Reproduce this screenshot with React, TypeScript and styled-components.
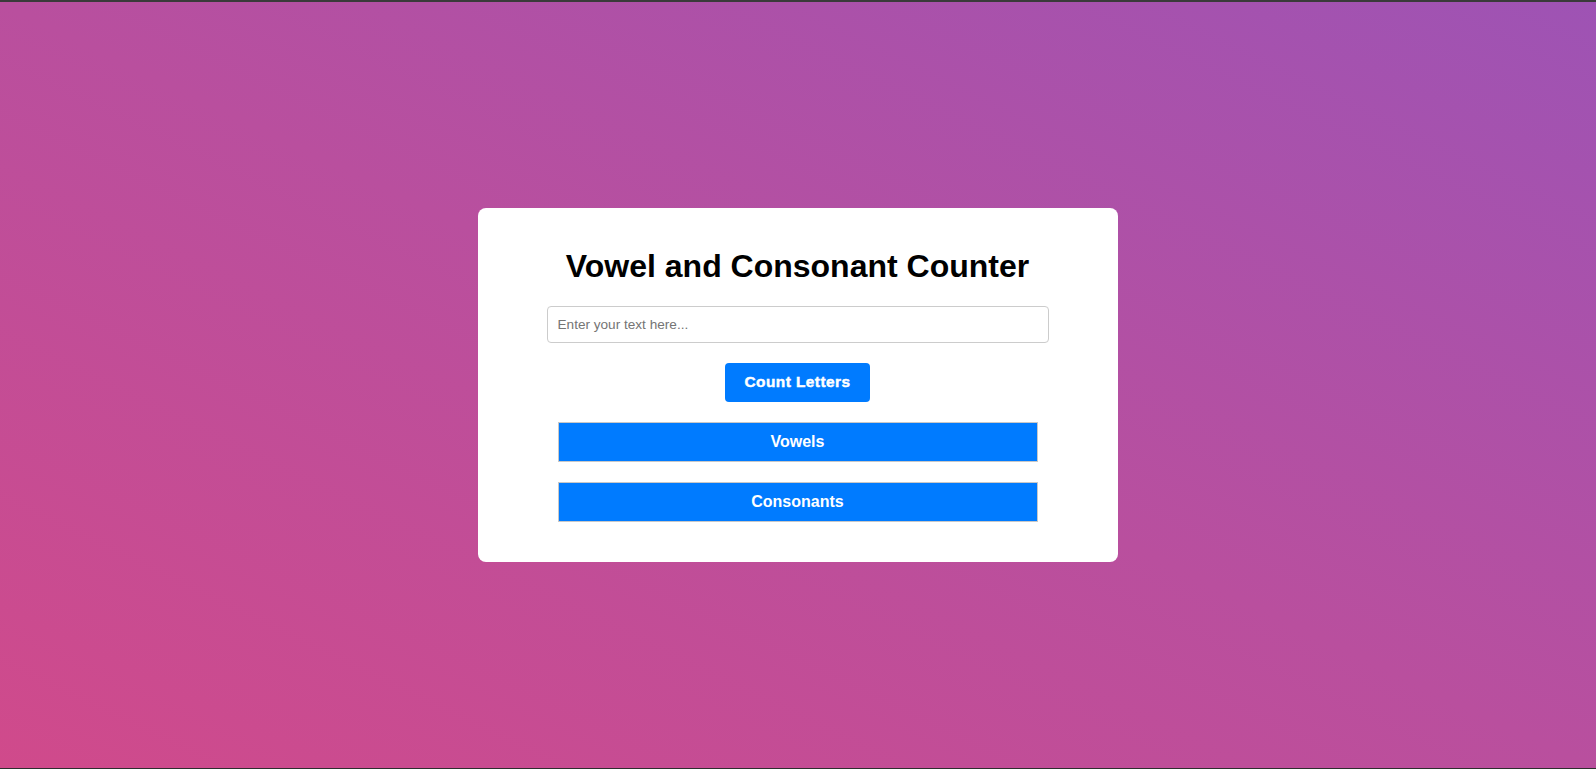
import React, { useState } from "react";
import styled, { createGlobalStyle } from "styled-components";

const GlobalStyle = createGlobalStyle`
  html, body {
    margin: 0;
    padding: 0;
  }
  body {
    font-family: "Liberation Sans", Arial, sans-serif;
  }
  * { box-sizing: content-box; }
`;

const Page = styled.div`
  height: 766px;
  border-top: 2px solid #3a3a3a;
  border-bottom: 1px solid #2e2e2e;
  background: linear-gradient(to top right, #d04a8b 0%, #b94f9e 50%, #9e53b4 100%);
  display: flex;
  align-items: center;
  justify-content: center;
  padding-right: 1px;
`;

const Card = styled.div`
  width: 600px;
  padding: 20px;
  background: #ffffff;
  border-radius: 8px;
  text-align: center;
`;

const Title = styled.h1`
  font-size: 32px;
  font-weight: bold;
  color: #000;
  margin: 20px 0 21.5px;
  line-height: 36.8px;
`;

const TextInput = styled.input`
  display: block;
  width: 80%;
  margin: 0 auto;
  padding: 10px;
  border: 1px solid #cccccc;
  border-radius: 4px;
  font-family: "Liberation Sans", Arial, sans-serif;
  font-size: 13.6px;
  line-height: 15px;
  color: #333;
  outline: none;
  &::placeholder {
    color: #757575;
  }
`;

const CountButton = styled.button`
  margin-top: 20px;
  padding: 10px 20px;
  border: none;
  border-radius: 4px;
  background: #007bff;
  color: #ffffff;
  font-family: "Liberation Sans", Arial, sans-serif;
  font-size: 15.4px;
  font-weight: bold;
  line-height: 18.5px;
  letter-spacing: 0.45px;
  -webkit-text-stroke: 0.45px #ffffff;
  cursor: pointer;
`;

const ResultBar = styled.div`
  width: 478px;
  margin: 20px auto 0;
  padding: 10px 0;
  border: 1px solid #c8c8c8;
  background: #007bff;
  color: #ffffff;
  font-size: 16px;
  font-weight: bold;
  line-height: 18px;
`;

const Results = styled.div`
  padding-bottom: 20px;
`;

const VOWELS = "aeiouAEIOU";

export default function App() {
  const [text, setText] = useState("");
  const [counts, setCounts] = useState<{ v: number; c: number } | null>(null);

  const count = () => {
    let v = 0;
    let c = 0;
    for (const ch of text) {
      if (/[a-zA-Z]/.test(ch)) {
        if (VOWELS.includes(ch)) v++;
        else c++;
      }
    }
    setCounts({ v, c });
  };

  return (
    <>
      <GlobalStyle />
      <Page>
        <Card>
          <Title>Vowel and Consonant Counter</Title>
          <TextInput
            type="text"
            placeholder="Enter your text here..."
            value={text}
            onChange={(e) => setText(e.target.value)}
          />
          <CountButton onClick={count}>Count Letters</CountButton>
          <Results>
            <ResultBar>Vowels{counts ? `: ${counts.v}` : ""}</ResultBar>
            <ResultBar>Consonants{counts ? `: ${counts.c}` : ""}</ResultBar>
          </Results>
        </Card>
      </Page>
    </>
  );
}
